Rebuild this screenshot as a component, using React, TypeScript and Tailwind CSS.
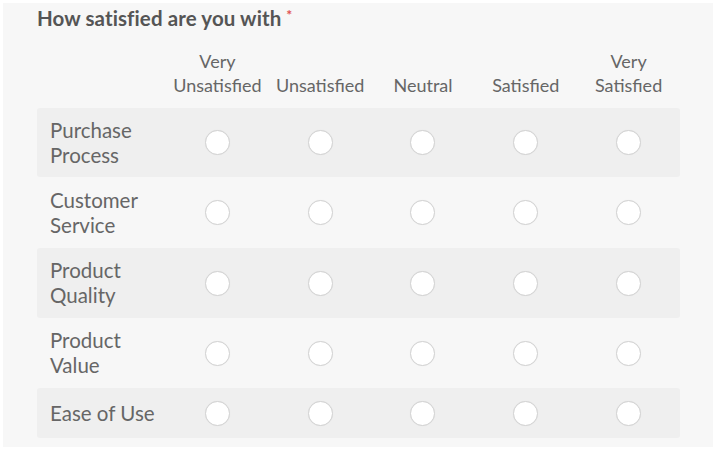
import React from "react";

const cols = [
  ["Very", "Unsatisfied"],
  ["Unsatisfied"],
  ["Neutral"],
  ["Satisfied"],
  ["Very", "Satisfied"],
];

const rows: { label: string[]; shaded: boolean; h: string }[] = [
  { label: ["Purchase", "Process"], shaded: true, h: "h-[69px]" },
  { label: ["Customer", "Service"], shaded: false, h: "h-[71px]" },
  { label: ["Product", "Quality"], shaded: true, h: "h-[70px]" },
  { label: ["Product", "Value"], shaded: false, h: "h-[70px]" },
  { label: ["Ease of Use"], shaded: true, h: "h-[50px]" },
];

function Radio() {
  return (
    <div className="w-[25px] h-[25px] rounded-full bg-white border-[1.5px] border-[#d2d2d2] shadow-[0_0_1px_rgba(0,0,0,0.08)]" />
  );
}

export default function App() {
  return (
    <div
      className="w-[720px] h-[451px] bg-white pt-[3px] pl-[3px] pr-[7px] pb-[4px]"
      style={{ fontFamily: "Lato, 'Open Sans', sans-serif" }}
    >
      <div className="h-full bg-[#f7f7f7] pl-[34px] pr-[33px] pt-[3px]">
        <div className="text-[20.5px] leading-[24px] font-bold text-[#555555] tracking-[0.1px]">
          How satisfied are you with
          <span className="text-[14px] text-[#e05050] align-top ml-[5px] relative top-[-3px]">*</span>
        </div>
        <div className="grid grid-cols-[129px_repeat(5,1fr)] items-end h-[78px] pb-[11px]">
          <div />
          {cols.map((c, i) => (
            <div key={i} className="text-center text-[18px] leading-[24px] text-[#666666]">
              {c.map((l, j) => (
                <div key={j}>{l}</div>
              ))}
            </div>
          ))}
        </div>
        {rows.map((r, i) => (
          <div
            key={i}
            className={`grid grid-cols-[129px_repeat(5,1fr)] items-center rounded-[3px] ${r.h} ${r.shaded ? "bg-[#efefef]" : ""}`}
          >
            <div className="pl-[13px] text-[20.5px] leading-[25px] text-[#666666]">
              {r.label.map((l, j) => (
                <div key={j}>{l}</div>
              ))}
            </div>
            {cols.map((_, j) => (
              <div key={j} className="flex justify-center">
                <Radio />
              </div>
            ))}
          </div>
        ))}
      </div>
    </div>
  );
}
